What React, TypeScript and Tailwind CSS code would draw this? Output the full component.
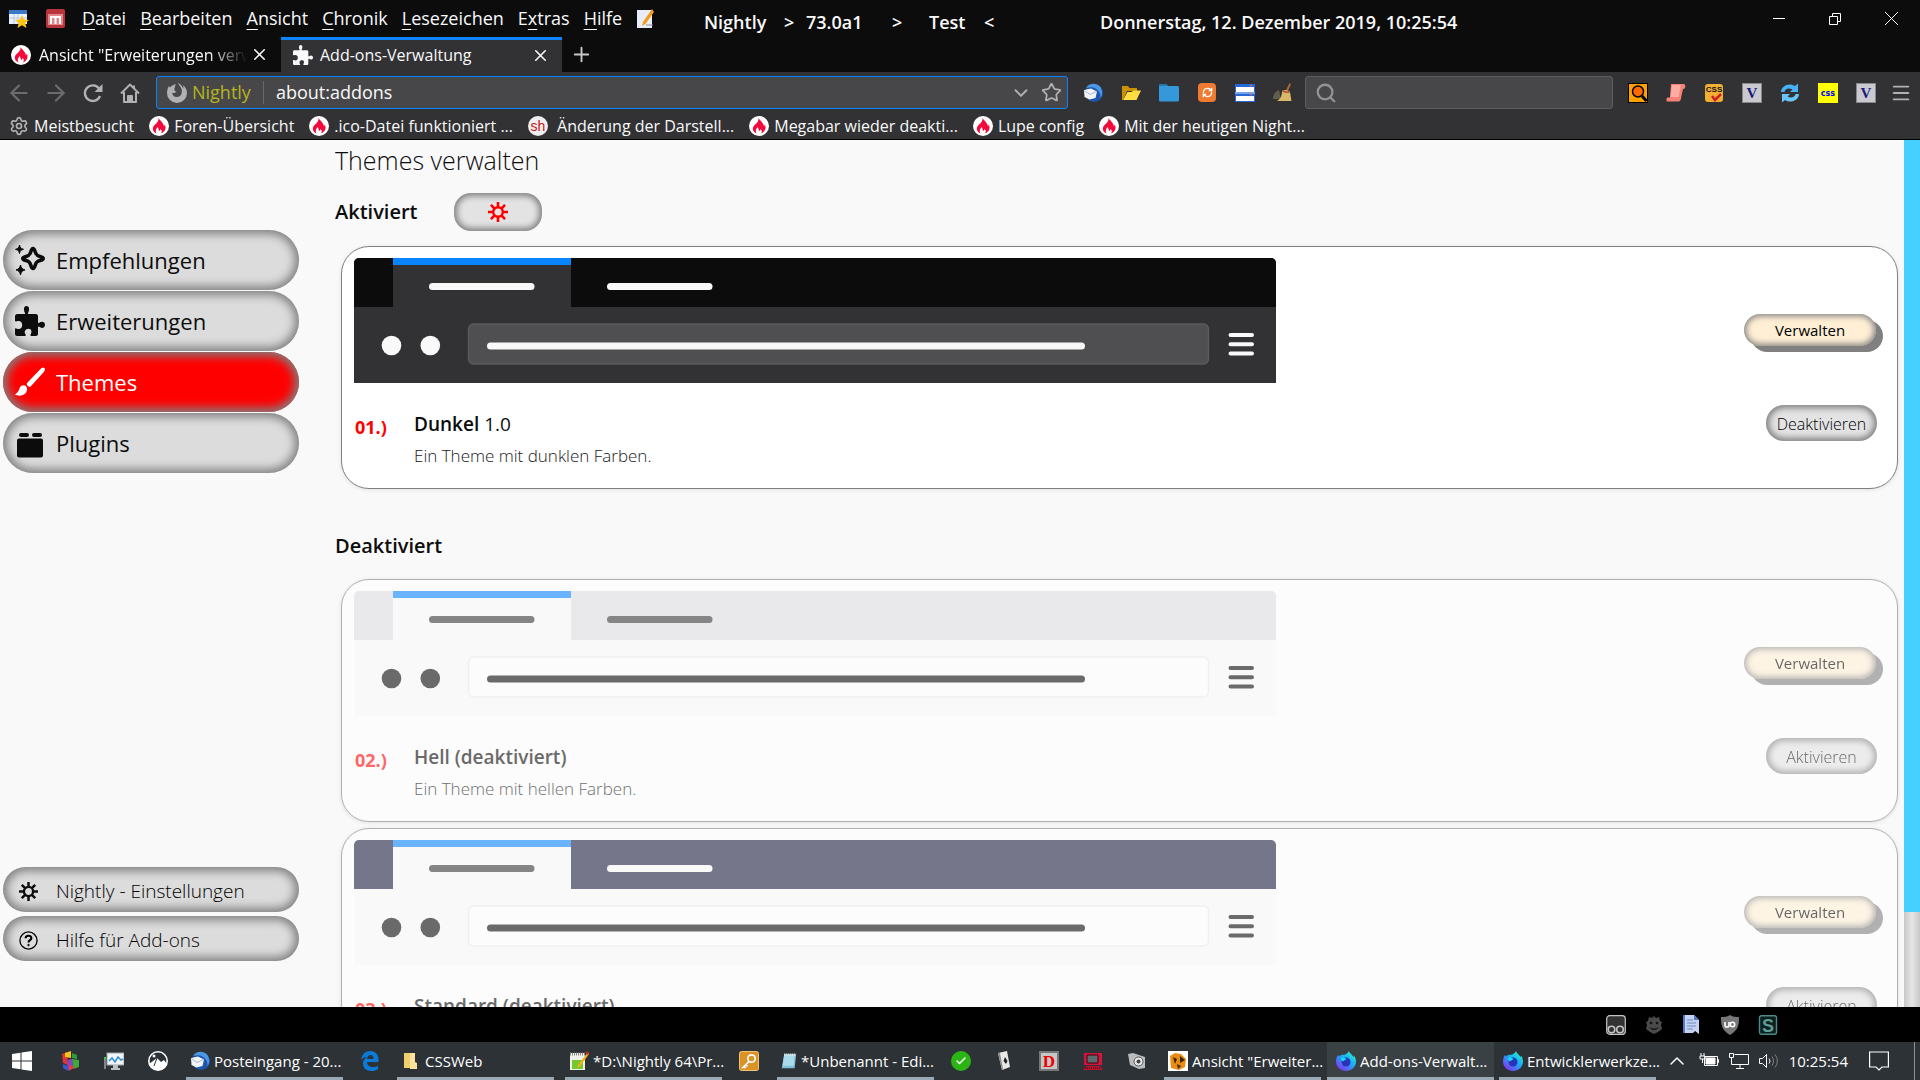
import type { ReactNode } from 'react'
import {
  ArrowLeft, ArrowRight, Star, ChevronDown, ChevronUp, Search, Menu,
  Settings, X, Plus, RefreshCw, Check,
} from 'lucide-react'

// Small icons

function FireIcon() {
  return (
    <svg width="20" height="20" viewBox="0 0 20 20" className="shrink-0">
      <circle cx="10" cy="10" r="10" fill="#fff" />
      <path d="M9.500 2c1 2.200 5 4.500 5.500 8.500.5-.5.7-1.300.6-2.200 2 3.200.9 7.700-3.600 9.200 1.200-1.500 1-3.200-.3-4.500-.2 1-.8 1.700-1.500 2-.3-1.600-1.300-2.400-1.200-4-2 1.500-3 4.300-1.300 6.400C3.500 16 2.800 12 5.300 9.300 7.700 7 9.800 5.500 9.500 2z" fill="#f5093a" />
    </svg>
  )
}

function GearIcon({ size, color }: { size: number; color: string }) {
  return (
    <svg width={size} height={size} viewBox="0 0 20 20" className="shrink-0" fill="none" stroke={color}>
      <circle cx="10" cy="10" r="4.800" strokeWidth="2.400" />
      <path d="M10 0v5M10 15v5M0 10h5M15 10h5M2.900 2.900l3.600 3.600M13.500 13.500l3.600 3.600M17.100 2.900l-3.600 3.600M6.500 13.500l-3.600 3.600" strokeWidth="2.600" />
    </svg>
  )
}

function PuzzleIcon({ size }: { size: number }) {
  return (
    <svg width={size} height={size} viewBox="0 0 30 30" className="shrink-0" fill="currentColor">
      <path d="M2 8h7.500c.6 0 .8-.5.5-1.100C8.500 4.500 8.300 0 11.500 0S14.600 4.500 13 6.900c-.3.600 0 1.100.6 1.100H21c1 0 2 1 2 2v6.300c0 .8.6 1 1.200.5 2.500-2 5.800-1.200 5.800 2s-3.300 4-5.800 2c-.6-.5-1.200-.2-1.200.5V28c0 1-1 2-2 2h-4.800c-.8 0-1-.7-.6-1.400 1.500-2.600 1.200-5.800-2.100-5.800s-4.800 3.200-2.900 5.800c.5.700.2 1.400-.6 1.400H2c-1 0-2-1-2-2v-4.800c0-.8.600-1 1.300-.7C4.500 24 7.200 22.500 7.200 19s-2.700-4.600-5.900-3.500C.6 15.700 0 15.400 0 14.800V10c0-1 1-2 2-2z" />
    </svg>
  )
}

function SparkleIcon() {
  return (
    <svg width="30" height="30" viewBox="0 0 30 30" className="shrink-0">
      <path d="M18 3.500c1.200 0 1.700 1.500 2.300 3.500 1 3 1.700 3.600 4.700 4.400 2 .5 3.200 1 3.200 2.100s-1.200 1.600-3.200 2.100c-3 .8-3.700 1.400-4.700 4.400-.6 2-1.100 3.500-2.300 3.500s-1.700-1.500-2.300-3.500c-1-3-1.700-3.600-4.700-4.400-2-.5-3.200-1-3.200-2.100s1.200-1.600 3.200-2.100c3-.8 3.700-1.400 4.700-4.400.6-2 1.100-3.500 2.300-3.500z" fill="none" stroke="currentColor" strokeWidth="3.600" strokeLinejoin="round" />
      <path d="M4.500 0c.7 3 1.300 3.500 4 4.300-2.700.8-3.300 1.300-4 4.200-.7-2.900-1.300-3.400-4-4.200 2.700-.8 3.300-1.300 4-4.300zM5.500 20c.8 3.300 1.600 4 4.500 4.900-2.900.9-3.700 1.600-4.500 5-.8-3.400-1.600-4.100-4.500-5 2.900-.9 3.700-1.600 4.500-4.900z" fill="currentColor" stroke="currentColor" />
    </svg>
  )
}

function BrushIcon() {
  return (
    <svg width="30" height="30" viewBox="0 0 30 30" className="shrink-0" fill="currentColor">
      <path d="M29.400 1.100c-1-1-2.300-.6-3.400.4L12.300 15.700c-1 1.200-.6 2.300.6 3.400s2.300 1 3.200-.1L29 4.700c1-1.300 1.300-2.700.4-3.600zM10.600 18.800c-2.600-1.500-5.200-.2-6 2.300C3.800 24 2.500 26 0 27.500c3 1.800 8 1.600 10.500-1.200 2-2.200 2-5.600.1-7.500z" />
    </svg>
  )
}

function PluginIcon() {
  return (
    <svg width="30" height="30" viewBox="0 0 30 30" className="shrink-0" fill="currentColor">
      <rect x="4" y="5" width="10" height="4" rx="2" />
      <rect x="17" y="5" width="10" height="4" rx="2" />
      <rect x="2" y="10.500" width="26" height="19" rx="2" />
    </svg>
  )
}

function HelpIcon() {
  return (
    <svg width="19" height="19" viewBox="0 0 20 20" className="shrink-0" fill="none" stroke="currentColor">
      <circle cx="10" cy="10" r="9" strokeWidth="1.400" />
      <path d="M7 7.600C7 5.800 8.300 5 10 5s3 1 3 2.600c0 2-3 2.200-3 4.400" strokeWidth="2.200" />
      <circle cx="10" cy="14.800" r="0.800" fill="currentColor" strokeWidth="1" />
    </svg>
  )
}

function FirefoxGlyph() {
  return (
    <svg width="20" height="20" viewBox="0 0 20 20" className="shrink-0">
      <path d="M9 1C5 2 3.500 4 3 4.500L2 3C.5 5.500 0 8 0 10a10 10 0 0 0 20 0c0-3-1.500-6-4-8 .5 1.500.5 2.500.3 3.500C15 2.500 13 1 11 0c.5 2 2.500 3 3.500 6s0 8-4.500 8c-3 0-5-2-4.500-4.500C6.500 10.500 8.500 10 9.500 8.500 7.500 8.500 7 7 7.500 5.500 8 4 8 2.500 9 1z" fill="#b1b1b3" />
    </svg>
  )
}

function FirefoxIcon({ id }: { id: string }) {
  return (
    <svg width="20" height="20" viewBox="0 0 20 20" className="shrink-0">
      <defs>
        <linearGradient id={id} x1="1" y1="0" x2="0.200" y2="1">
          <stop offset="0" stopColor="#3dffb0" />
          <stop offset="0.450" stopColor="#14b5f5" />
          <stop offset="1" stopColor="#8a2cf5" />
        </linearGradient>
      </defs>
      <path d="M13 0c.5 2.500 3 3 4.500 6 .5-.5.500-1 .5-1.500C19.500 6.500 20 9 20 10.500 20 16 15.500 20 10 20S0 16 0 10.500C0 8 .8 5.500 2 4l1 1.500C4 4.500 5 4 6.500 3.800 8.500 3.800 11 3.500 13 0z" fill={`url(#${id})`} />
      <circle cx="10" cy="11" r="4.500" fill="#2b32b8" />
      <path d="M5 7c2-1 4-.5 5.500 1.500-2 .2-2 1.500-3.500 1.800C6 10 5 9 5 7z" fill="#0ce2ee" />
    </svg>
  )
}

function ThunderbirdIcon() {
  return (
    <svg width="20" height="20" viewBox="0 0 20 20" className="shrink-0">
      <circle cx="11" cy="10" r="9" fill="#1d56ad" />
      <path d="M3 5C6 0 13-.5 17 3.500c3 4 2.500 9 .5 11.500C18 10 15 6 10 4.500 7 4 5 4.500 3 5z" fill="#4b97e2" />
      <path d="M1 7l7-1.500 6 3-1.500 6.500-6 1.500L1.500 14z" fill="#f1f4f8" />
      <path d="M1.500 7.500L7 11.500l6.500-3" fill="none" stroke="#a9b9cb" />
    </svg>
  )
}

function OpenFolderIcon() {
  return (
    <svg width="20" height="20" viewBox="0 0 20 20">
      <path d="M1 3h6l1.500 2H16v3H6L2 17H1z" fill="#c99200" />
      <path d="M6.500 9h4l2-1.500H20L15.500 17H2z" fill="#ffdc40" />
    </svg>
  )
}

function BlueFolderIcon() {
  return (
    <svg width="20" height="20" viewBox="0 0 20 20">
      <path d="M0 2.500C0 1.500 1 1 2 1h5l2 2h9c1.500 0 2 .5 2 2v12c0 1-.5 1.500-1.500 1.500h-17C.5 18.500 0 18 0 17z" fill="#3498db" />
      <path d="M0 2.500C0 1.500 1 1 2 1h5l2 2H0z" fill="#2477ad" />
    </svg>
  )
}

function ServerIcon() {
  return (
    <svg width="20" height="20" viewBox="0 0 20 20">
      <rect x="0" y="1" width="20" height="18" fill="#2467d6" />
      <path d="M1 4h18v5H1zM1 13h18v5H1z" fill="#fff" />
      <path d="M0 10h20" stroke="#cfe0fb" />
      <path d="M15 2.500h2M15 11.500h2" stroke="#e0607c" strokeWidth="1.500" />
    </svg>
  )
}

function BroomIcon() {
  return (
    <svg width="20" height="20" viewBox="0 0 20 20">
      <path d="M0 16c0-5 3-8 6-9l2 9z" fill="#615d50" />
      <path d="M16.500 0l1.500 1-3 7-2-1z" fill="#a9692c" />
      <path d="M9 8c3-2 6-1 8 1l1.500 9H4c3-2 5-4 5-10z" fill="#d9b868" />
      <path d="M9.500 8c2 1 4 1.500 7 1" fill="none" stroke="#b3543a" strokeWidth="1.500" />
    </svg>
  )
}

function MagnifierBox() {
  return (
    <svg width="20" height="20" viewBox="0 0 20 20">
      <rect x="0.500" y="0.500" width="19" height="19" fill="#ffa200" stroke="#000" />
      <circle cx="10" cy="8.500" r="5.500" fill="#ff6a00" stroke="#000" strokeWidth="1.500" />
      <path d="M14 13l4.500 5" stroke="#000" strokeWidth="3" />
    </svg>
  )
}

function ScrollIcon() {
  return (
    <svg width="20" height="20" viewBox="0 0 20 20">
      <path d="M5 1h13c2 1 1.500 4 0 5h-1l-2 9c0 3-2 3.500-3 3.500H1c-1-1.500-.5-4 1-4h2z" fill="#f48276" />
      <path d="M6 2h9l-2.500 12H4.500z" fill="#ffaca2" />
    </svg>
  )
}

function CssCheckIcon() {
  return (
    <svg width="20" height="20" viewBox="0 0 20 20">
      <rect x="1" y="1" width="18" height="18" rx="3" fill="#f3ae34" />
      <text x="10" y="9" textAnchor="middle" fontSize="8" fontWeight="700" fontFamily="Liberation Sans" fill="#111">CSS</text>
      <path d="M8 13l3 4 6-6" fill="none" stroke="#cf2020" strokeWidth="2.500" />
    </svg>
  )
}

function VIcon() {
  return (
    <svg width="20" height="20" viewBox="0 0 20 20">
      <rect x="0.500" y="0.500" width="19" height="19" fill="#c9c9cf" stroke="#87878c" />
      <text x="10" y="15" textAnchor="middle" fontSize="15" fontWeight="700" fontFamily="Liberation Serif" fill="#1a1a78">V</text>
    </svg>
  )
}

function SyncIcon() {
  return (
    <svg width="20" height="20" viewBox="0 0 20 20">
      <path d="M1 9C1 3 9-1 15 3l3-2.500V9h-8l2.500-2.500C9 4.500 5 5.500 4.500 9z" fill="#48b2f5" />
      <path d="M19 11c0 6-8 10-14 6l-3 2.500V11h8l-2.500 2.500c3.500 2 7.500 1 8-2.500z" fill="#6ac4fb" />
    </svg>
  )
}

function CssYellow() {
  return (
    <svg width="20" height="20" viewBox="0 0 20 20">
      <rect width="20" height="20" fill="#ff0" />
      <text x="10" y="13" textAnchor="middle" fontSize="8" fontWeight="700" fontFamily="DejaVu Sans" fill="#00f">css</text>
    </svg>
  )
}

function NoteIcon() {
  return (
    <svg width="20" height="20" viewBox="0 0 20 20" className="shrink-0">
      <rect x="1" y="2" width="15" height="17" fill="#f1f1ec" />
      <path d="M1 3h15" stroke="#888" strokeWidth="3" strokeDasharray="1 1" />
      <path d="M3 9h11v9H3z" fill="#74c829" />
      <path d="M19 1L9 14l-1 3 3-1.500L20 3z" fill="#f0b21c" />
      <path d="M18 0l2 2-1.500 2-2-2z" fill="#c72b25" />
    </svg>
  )
}

// Browser header

const MENU = [
  { key: 'D', rest: 'atei' },
  { key: 'B', rest: 'earbeiten' },
  { key: 'A', rest: 'nsicht' },
  { key: 'C', rest: 'hronik' },
  { key: 'L', rest: 'esezeichen' },
  { pre: 'E', key: 'x', rest: 'tras' },
  { key: 'H', rest: 'ilfe' },
]

function MenuBar() {
  return (
    <div className="flex h-[37px] items-center pl-[9px] text-[18px]">
      <div className="flex w-[695px] shrink-0 items-center">
        <svg width="20" height="20" viewBox="0 0 20 20" className="mr-[17px]">
          <rect y="1" width="18" height="14" fill="#e9f1fa" />
          <rect y="1" width="18" height="4" fill="#3c78c8" />
          <path d="M5 5v10M9 5v10M0 9h18" stroke="#b5c9de" />
          <path d="M13 6l2 4.500 5 .5-3.800 3 1.300 5-4.500-2.800L8.500 19l1.300-5L6 11l5-.5z" fill="#fdc416" />
        </svg>
        <svg width="20" height="20" viewBox="0 0 20 20" className="mr-[16px]">
          <rect width="19" height="19" rx="2" fill="#b9343c" />
          <rect x="2" y="5" width="15" height="11" fill="#e5858a" />
          <path d="M5 15V8h9v7M9.500 8v7" fill="none" stroke="#fff" strokeWidth="2" />
        </svg>
        <nav className="flex gap-[14px] pb-[2px]">
          {MENU.map(m => (
            <button key={m.rest} className="leading-6">
              {m.pre}<span className="underline underline-offset-4">{m.key}</span>{m.rest}
            </button>
          ))}
        </nav>
        <svg width="20" height="20" viewBox="0 0 20 20" className="ml-[14px] shrink-0">
          <path d="M1 1h15v18H1z" fill="#e8edf7" />
          <path d="M16 0L7 13l-1 4 3.500-2L18 3z" fill="#f59b1d" />
          <path d="M10 16h7" stroke="#88a" />
        </svg>
      </div>
      <div className="flex pt-[8px] font-semibold whitespace-pre">
        <span className="w-[80px]">Nightly</span>
        <span className="w-[22px]">&gt;</span>
        <span className="w-[86px]">73.0a1</span>
        <span className="w-[37px]">&gt;</span>
        <span className="w-[55px]">Test</span>
        <span className="w-[116px]">&lt;</span>
        <span>Donnerstag, 12. Dezember 2019, 10:25:54</span>
      </div>
      <div className="ml-auto flex gap-[44px] pr-[22px]">
        <button aria-label="Minimieren"><svg width="12" height="12"><path d="M0 5.500h12" stroke="#fff" /></svg></button>
        <button aria-label="Wiederherstellen">
          <svg width="12" height="12" fill="none" stroke="#fff"><path d="M.5 3.500h8v8h-8zM3.500 3.500v-3h8v8h-3" /></svg>
        </button>
        <button aria-label="Schließen"><svg width="13" height="13"><path d="M0 0l13 13M13 0L0 13" stroke="#fff" /></svg></button>
      </div>
    </div>
  )
}

function TabBar() {
  return (
    <div className="flex h-[35px] text-[16px]">
      <div className="flex w-[281px] items-center pl-[11px]">
        <FireIcon />
        <span className="ml-[8px] w-[208px] overflow-hidden whitespace-nowrap [mask-image:linear-gradient(to_right,black_82%,transparent)]">
          Ansicht "Erweiterungen verwalten"
        </span>
        <button aria-label="Tab schließen" className="ml-[3px]"><X size={19} strokeWidth={2} /></button>
      </div>
      <div className="flex w-[281px] items-center border-t-[3px] border-[#0a84ff] bg-[#323234] pr-[12px] pb-[2px] pl-[12px]">
        <PuzzleIcon size={20} />
        <span className="ml-[7px] flex-1">Add-ons-Verwaltung</span>
        <button aria-label="Tab schließen"><X size={19} strokeWidth={2} /></button>
      </div>
      <button aria-label="Neuer Tab" className="ml-[8px] text-[#c8c8c9]"><Plus size={23} strokeWidth={2} /></button>
    </div>
  )
}

function ToolButton({ label, children }: { label: string; children: ReactNode }) {
  return <button aria-label={label} className="flex h-5 w-5 shrink-0 items-center justify-center">{children}</button>
}

function NavBar() {
  return (
    <div className="flex h-[41px] items-center pr-[9px] pl-[9px] text-[#b1b1b3]">
      <div className="flex gap-[17px]">
        <ToolButton label="Zurück"><ArrowLeft size={26} className="shrink-0 text-[#6c6c6e]" /></ToolButton>
        <ToolButton label="Vor"><ArrowRight size={26} className="shrink-0 text-[#6c6c6e]" /></ToolButton>
        <ToolButton label="Neu laden">
          <svg width="20" height="20" viewBox="0 0 20 20" fill="none" stroke="currentColor" strokeWidth="2.400">
            <path d="M16 5.500A7.800 7.800 0 1 0 17 13" />
            <path d="M19.500 1v8h-8z" fill="currentColor" stroke="none" />
          </svg>
        </ToolButton>
        <ToolButton label="Startseite">
          <svg width="20" height="20" viewBox="0 0 20 20" fill="none" stroke="currentColor" strokeWidth="2" strokeLinejoin="round">
            <path d="M1 10.500L10 1.500l9 9M4 9v10h12V9M14 5V2.500" />
            <path d="M8 19v-6h4v6" fill="currentColor" />
          </svg>
        </ToolButton>
      </div>
      <div className="ml-[16px] flex h-[33px] flex-1 items-center rounded-[3px] border border-[#0a84ff] bg-[#474749] px-[10px]">
        <FirefoxGlyph />
        <span className="ml-[5px] text-[18px] text-[#b5b51c]">Nightly</span>
        <span className="ml-[12px] h-[23px] w-px bg-[#69696b]" />
        <input aria-label="Adresse" defaultValue="about:addons" className="ml-[12px] min-w-0 flex-1 bg-transparent text-[18px] text-[#f9f9fa] outline-none" />
        <ChevronDown size={22} />
        <Star size={21} className="ml-[9px] -mr-[5px]" />
      </div>
      <div className="ml-[15px] flex gap-[18px]">
        <ToolButton label="Thunderbird"><ThunderbirdIcon /></ToolButton>
        <ToolButton label="Ordner öffnen"><OpenFolderIcon /></ToolButton>
        <ToolButton label="Profilordner"><BlueFolderIcon /></ToolButton>
        <ToolButton label="Neustart">
          <span className="flex h-[19px] w-[18px] items-center justify-center rounded-[4px] bg-[#ef7b31] text-white"><RefreshCw size={11} strokeWidth={3} /></span>
        </ToolButton>
        <ToolButton label="Server"><ServerIcon /></ToolButton>
        <ToolButton label="Aufräumen"><BroomIcon /></ToolButton>
      </div>
      <label className="ml-[12px] flex h-[33px] w-[308px] items-center rounded-[3px] border border-[#5d5d5f] bg-[#474749] pl-[9px]">
        <Search size={22} strokeWidth={2.500} className="shrink-0 text-[#939395]" />
        <input aria-label="Suchen" className="w-full bg-transparent outline-none" />
      </label>
      <div className="ml-[15px] flex gap-[18px]">
        <ToolButton label="Lupe"><MagnifierBox /></ToolButton>
        <ToolButton label="Skripte"><ScrollIcon /></ToolButton>
        <ToolButton label="CSS prüfen"><CssCheckIcon /></ToolButton>
        <ToolButton label="Version"><VIcon /></ToolButton>
        <ToolButton label="Synchronisieren"><SyncIcon /></ToolButton>
        <ToolButton label="CSS"><CssYellow /></ToolButton>
        <ToolButton label="Version prüfen"><VIcon /></ToolButton>
      </div>
      <div className="ml-[15px] flex">
        <ToolButton label="Menü"><Menu size={22} className="shrink-0" /></ToolButton>
      </div>
    </div>
  )
}

const BOOKMARKS = [
  'Foren-Übersicht',
  '.ico-Datei funktioniert ...',
  'Änderung der Darstell...',
  'Megabar wieder deakti...',
  'Lupe config',
  'Mit der heutigen Night...',
]

function Bookmarks() {
  return (
    <div className="flex h-[27px] items-center gap-[15px] border-b border-black pl-[9px] text-[16px] whitespace-nowrap">
      <a href="#meist" className="flex items-center gap-[5px]">
        <Settings size={20} className="text-[#b1b1b3]" />Meistbesucht
      </a>
      {BOOKMARKS.map((b, i) => (
        <a key={b} href={`#lesezeichen-${i}`} className="flex items-center gap-[5px]">
          {b.startsWith('Änderung') ? (
            <svg width="20" height="20" viewBox="0 0 20 20" className="mr-[4px]">
              <circle cx="10" cy="10" r="10" fill="#eee" />
              <text x="10" y="15" textAnchor="middle" fontSize="14" fontFamily="Liberation Sans" fill="#c4161c">sh</text>
            </svg>
          ) : <FireIcon />}
          {b}
        </a>
      ))}
    </div>
  )
}

// Add-on manager

const NAV = [
  { label: 'Empfehlungen', icon: <SparkleIcon />, active: false },
  { label: 'Erweiterungen', icon: <PuzzleIcon size={30} />, active: false },
  { label: 'Themes', icon: <BrushIcon />, active: true },
  { label: 'Plugins', icon: <PluginIcon />, active: false },
]

function Sidebar() {
  return (
    <aside className="flex w-[335px] shrink-0 flex-col justify-between pt-[90px] pb-[46px] pl-[3px]">
      <nav className="flex w-[296px] flex-col gap-px">
        {NAV.map(n => (
          <button
            key={n.label}
            className={`flex h-[60px] items-center gap-[11px] rounded-[30px] pl-[12px] text-[22px] shadow-[inset_0_0_10px_4px_#808080] ${
              n.active ? 'bg-[#ff0000] text-white' : 'bg-[#dcdcdc] text-[#0c0c0d]'
            }`}
          >
            {n.icon}{n.label}
          </button>
        ))}
      </nav>
      <div className="flex w-[296px] flex-col gap-[4px] text-[19px] font-light text-black">
        <button className="flex h-[45px] items-center gap-[18px] rounded-[23px] bg-[#dcdcdc] pt-[3px] pl-[16px] shadow-[inset_0_0_10px_4px_#808080]">
          <GearIcon size={19} color="#0c0c0d" />Nightly - Einstellungen
        </button>
        <button className="flex h-[45px] items-center gap-[18px] rounded-[23px] bg-[#dcdcdc] pt-[3px] pl-[16px] shadow-[inset_0_0_10px_4px_#808080]">
          <HelpIcon />Hilfe für Add-ons
        </button>
      </div>
    </aside>
  )
}

interface Palette {
  frame: string
  toolbar: string
  accent: string
  tabLine: string
  frameLine: string
  icon: string
  field: string
  fieldBorder: string
}

const DARK: Palette = {
  frame: '#0c0c0d', toolbar: '#323234', accent: '#0a84ff', tabLine: '#f9f9fa',
  frameLine: '#f9f9fa', icon: '#f9f9fa', field: '#4f4f51', fieldBorder: '#5b5b5d',
}
const LIGHT: Palette = {
  frame: '#e9e9eb', toolbar: '#f9f9fa', accent: '#69b3ff', tabLine: '#858585',
  frameLine: '#858585', icon: '#6a6a6a', field: '#fcfcfc', fieldBorder: '#f0f0f0',
}
const STANDARD: Palette = { ...LIGHT, frame: '#76768a', frameLine: '#f9f9fa' }

function ThemePreview({ p }: { p: Palette }) {
  return (
    <svg viewBox="0 0 922 125" className="h-[125px] w-[922px] rounded-t-[5px]">
      <rect width="922" height="125" fill={p.toolbar} />
      <rect width="39" height="49" fill={p.frame} />
      <rect x="217" width="705" height="49" fill={p.frame} />
      <rect x="39" width="178" height="7" fill={p.accent} />
      <rect x="75" y="25" width="105.500" height="7" rx="3.500" fill={p.tabLine} />
      <rect x="253" y="25" width="105.500" height="7" rx="3.500" fill={p.frameLine} />
      <circle cx="37.500" cy="87.500" r="9.800" fill={p.icon} />
      <circle cx="76.300" cy="87.500" r="9.800" fill={p.icon} />
      <rect x="114.500" y="66" width="740" height="40" rx="5" fill={p.field} stroke={p.fieldBorder} strokeWidth="1.400" />
      <rect x="133" y="84.500" width="598" height="7" rx="3.500" fill={p.icon} />
      <path d="M876.500 77h21.500M876.500 86.200h21.500M876.500 95.400h21.500" stroke={p.icon} strokeWidth="4" strokeLinecap="round" />
    </svg>
  )
}

interface Theme {
  nr: string
  name: string
  suffix: string
  text: string
  action: string
  palette: Palette
}

const ENABLED: Theme = {
  nr: '01.)', name: 'Dunkel', suffix: ' 1.0', text: 'Ein Theme mit dunklen Farben.', action: 'Deaktivieren', palette: DARK,
}
const DISABLED: Theme[] = [
  { nr: '02.)', name: 'Hell (deaktiviert)', suffix: '', text: 'Ein Theme mit hellen Farben.', action: 'Aktivieren', palette: LIGHT },
  { nr: '03.)', name: 'Standard (deaktiviert)', suffix: '', text: 'Ein Theme mit den Farben des Betriebssystems.', action: 'Aktivieren', palette: STANDARD },
]

function ThemeCard({ theme, off = false }: { theme: Theme; off?: boolean }) {
  return (
    <article
      className={`flex h-[243px] shrink-0 justify-between rounded-[28px] border pt-[11px] pl-[12px] shadow-[0_1px_4px_rgba(12,12,13,0.1)] ${
        off ? 'border-[#b0b0b0] bg-[#fcfcfc]' : 'border-[#808080] bg-white'
      }`}
    >
      <div>
        <ThemePreview p={theme.palette} />
        <div className="mt-[26px] flex">
          <span className={`w-[60px] pt-[6px] pl-px text-[18px] leading-6 font-bold ${off ? 'text-[#ff6666]' : 'text-[#ff0000]'}`}>{theme.nr}</span>
          <div>
            <h3 className={`text-[19px] leading-[30px] ${off ? 'text-[#6a6a6a]' : 'text-[#0c0c0d]'}`}>
              <span className="font-semibold">{theme.name}</span>{theme.suffix}
            </h3>
            <p className={`mt-[5px] text-[17px] leading-6 font-light ${off ? 'text-[#6f6f71]' : 'text-[#18181a]'}`}>{theme.text}</p>
          </div>
        </div>
      </div>
      <div className={`flex flex-col items-end pt-[56px] pr-[20px] text-black ${off ? 'opacity-60' : ''}`}>
        <button className="mr-px h-[32px] w-[132px] rounded-[16px] bg-[#ffefd5] text-[15px] shadow-[inset_0_0_6px_2px_#808080,7px_6px_0_0_#808080]">
          Verwalten
        </button>
        <button className="mt-[59px] h-[36px] w-[111px] rounded-[18px] bg-[#e3e3e4] pt-px text-[16px] font-light shadow-[inset_0_0_6px_3px_#808080]">
          {theme.action}
        </button>
      </div>
    </article>
  )
}

function Manager() {
  return (
    <main className="flex min-h-0 flex-1 overflow-hidden bg-[#f9f9fa]">
      <Sidebar />
      <div className="flex min-w-0 flex-1 flex-col overflow-hidden pr-[6px]">
        <h1 className="mt-px text-[25px] leading-[38px] font-light text-[#0c0c0d]">Themes verwalten</h1>
        <div className="mt-[14px] flex shrink-0 items-center">
          <h2 className="w-[119px] text-[20px] font-semibold text-[#0c0c0d]">Aktiviert</h2>
          <button aria-label="Werkzeuge" className="flex h-[38px] w-[88px] items-center justify-center rounded-[17px] bg-[#e3e3e4] shadow-[inset_0_0_6px_3px_#808080]">
            <GearIcon size={20} color="#ff0000" />
          </button>
        </div>
        <section className="mt-[15px] ml-[6px]">
          <ThemeCard theme={ENABLED} />
        </section>
        <h2 className="mt-[42px] text-[20px] leading-[30px] font-semibold text-[#0c0c0d]">Deaktiviert</h2>
        <section className="mt-[18px] ml-[6px] flex flex-col gap-[6px]">
          {DISABLED.map(t => <ThemeCard key={t.nr} theme={t} off />)}
        </section>
      </div>
      <div className="w-[16px] shrink-0 bg-gradient-to-r from-[#c8c8c8] via-[#e6e6e6] to-[#c8c8c8]">
        <div className="h-[89%] bg-[#45d0ff]" />
      </div>
    </main>
  )
}

function StatusBar() {
  return (
    <footer className="flex h-[35px] shrink-0 items-center justify-end gap-[18px] bg-black pr-[142px]">
      <svg width="20" height="20" viewBox="0 0 20 20" fill="none" stroke="#c5c5c5">
        <rect x="0.700" y="0.700" width="18.600" height="18.600" rx="3" fill="#333" strokeWidth="1.200" />
        <circle cx="5.500" cy="14.500" r="3.300" strokeWidth="1.600" /><circle cx="14" cy="14.500" r="3.300" strokeWidth="1.600" />
      </svg>
      <svg width="20" height="20" viewBox="0 0 20 20" fill="#4a4a4a">
        <path d="M10 1l2 2 3-1 1 4 2 1-1 3 1 4-4 3-4 2-4-2-4-3 1-4-1-3 2-1 1-4 3 1z" />
        <circle cx="7" cy="8" r="1.300" fill="#111" /><circle cx="13" cy="8" r="1.300" fill="#111" />
        <path d="M5.500 12c3 2 6 2 9 0-1 4-8 4-9 0z" fill="#111" />
      </svg>
      <svg width="20" height="20" viewBox="0 0 20 20">
        <path d="M2 0h10l5 5v14l-4-3-2 2H2z" fill="#c3d3f1" />
        <path d="M5 5h6M5 8h9M5 11h9M5 14h6" stroke="#6c8bc8" />
        <path d="M1 0h2v18H1z" fill="#5479c9" />
        <path d="M12 0v5h5z" fill="#5479c9" />
      </svg>
      <svg width="20" height="20" viewBox="0 0 20 20">
        <path d="M10 0c3 2 6 2 9 2 0 9-1 13-9 18C2 15 1 11 1 2c3 0 6 0 9-2z" fill="#77777a" />
        <path d="M5 7v3.500c0 2 4 2 4 0V7" fill="none" stroke="#fff" strokeWidth="1.600" />
        <circle cx="12.500" cy="9.500" r="2.200" fill="none" stroke="#fff" strokeWidth="1.600" />
      </svg>
      <svg width="20" height="20" viewBox="0 0 20 20">
        <rect x="1.500" y="0.700" width="17" height="18.600" rx="2" fill="#0c1f1e" stroke="#4e8a86" strokeWidth="1.400" />
        <text x="10" y="16.500" textAnchor="middle" fontSize="18" fontWeight="700" fontFamily="Liberation Sans" fill="#5e9c97">S</text>
      </svg>
    </footer>
  )
}

// Windows taskbar

function TaskIcon({ label, className, children }: { label: string; className?: string; children: ReactNode }) {
  return <button aria-label={label} className={`flex h-full w-[20px] shrink-0 items-center ${className ?? ''}`}>{children}</button>
}

function TaskButton({ icon, label, active = false, className }: {
  icon: ReactNode
  label: string
  active?: boolean
  className?: string
}) {
  return (
    <button
      className={`flex h-full shrink-0 items-center gap-[4px] border-b-[3px] border-[#99aab5] pt-[3px] whitespace-nowrap ${
        active ? 'w-[167px] bg-[#3a4145] pl-[9px]' : 'w-[157px] pl-[4px]'
      } ${className ?? ''}`}
    >
      {icon}{label}
    </button>
  )
}

function Taskbar() {
  return (
    <div className="flex h-[38px] shrink-0 items-center bg-[#2d3237] text-[15px] text-white">
      <TaskIcon label="Start" className="ml-[12px]">
        <svg width="20" height="20" viewBox="0 0 20 20" fill="#fff"><path d="M0 3l8.500-1.200v7.700H0zM9.500 1.600L20 0v9.500H9.500zM0 10.500h8.500v7.700L0 17zM9.500 10.500H20V20L9.500 18.400z" /></svg>
      </TaskIcon>
      <TaskIcon label="Classic Shell" className="ml-[28px]">
        <svg width="20" height="20" viewBox="0 0 20 20">
          <path d="M2 3l5-2 1 13-5-2z" fill="#e23535" /><path d="M5 2l6-2v7L5 6z" fill="#f2c618" />
          <path d="M12 2l5 2v4l-5-1z" fill="#2f9e38" /><path d="M12 8l7 1v7l-6 2z" fill="#3fa93d" />
          <path d="M3 13l5 2v5l-5-3z" fill="#3659d2" /><path d="M7 9l5-1 1 9-5 2z" fill="#8a44c2" /><path d="M9 14l6 2-6 4z" fill="#e83c3c" />
        </svg>
      </TaskIcon>
      <TaskIcon label="Leistung" className="ml-[24px]">
        <svg width="20" height="20" viewBox="0 0 20 20">
          <rect x="3" y="2" width="17" height="12" fill="#f0f4f6" stroke="#9ba6ad" />
          <path d="M5 10l3-3 3 4 3-5 3 3 2-1" fill="none" stroke="#2d8fd5" strokeWidth="1.500" />
          <path d="M9 14h5v3h2v2H7v-2h2z" fill="#b8bfc3" /><path d="M0 7h2v11H0z" fill="#7e878c" /><path d="M0 6h2v2H0z" fill="#34d834" />
        </svg>
      </TaskIcon>
      <TaskIcon label="Fotos" className="ml-[24px]">
        <svg width="20" height="20" viewBox="0 0 20 20">
          <circle cx="10" cy="10" r="9.200" fill="none" stroke="#fff" strokeWidth="1.600" />
          <path d="M1 13L9 7l4 4 3-2 3 4c-1 4-5 6-9 6s-8-2-9-6z" fill="#fff" /><circle cx="6" cy="5" r="1.500" fill="#fff" /><path d="M9 7l-3 8" stroke="#2d3237" />
        </svg>
      </TaskIcon>
      <TaskButton className="ml-[18px]" icon={<ThunderbirdIcon />} label="Posteingang - 20..." />
      <TaskIcon label="Edge" className="ml-[18px]">
        <svg width="18" height="20" viewBox="0 0 18 20"><path d="M0 9C1 3 4.500 0 9.500 0S17.500 4 17.500 8v3H6c0 3 2.500 5 6 5 2 0 4-.5 5-1.500V18c-2 1.500-4 2-6.500 2C5 20 2 17 2 12.500c0-3 1.500-5 4-6.500C3.500 6 1.500 7 0 9zm6-1h6.500c0-2.500-1-4-3-4S6.300 6 6 8z" fill="#0b7bd8" /></svg>
      </TaskIcon>
      <TaskButton
        className="ml-[16px]"
        label="CSSWeb"
        icon={<svg width="20" height="20" viewBox="0 0 20 20"><path d="M3 2h9v15H3z" fill="#f0cd6d" /><path d="M9 2h5v9l2 1v6H9z" fill="#fce29a" /></svg>}
      />
      <TaskButton className="ml-[11px]" icon={<NoteIcon />} label="*D:\Nightly 64\Pr..." />
      <TaskIcon label="Passwörter" className="ml-[17px]">
        <svg width="20" height="20" viewBox="0 0 20 20">
          <rect x="0.500" y="0.500" width="19" height="19" rx="2" fill="#db9325" stroke="#f0c478" />
          <circle cx="12.500" cy="7.500" r="3.700" fill="none" stroke="#fff" strokeWidth="1.700" /><path d="M10 10.500l-6 6h3M7 14l1.500 1.500" fill="none" stroke="#fff" strokeWidth="1.700" />
        </svg>
      </TaskIcon>
      <TaskButton
        className="ml-[18px]"
        label="*Unbenannt - Edi..."
        icon={<svg width="20" height="20" viewBox="0 0 20 20"><path d="M4 2h15l-2 17H1z" fill="#7fc1d8" /><path d="M4 2h13l-1 14H2z" fill="#a9dbea" /><path d="M4 2h15" stroke="#e8eef0" strokeWidth="3" strokeDasharray="1.500 1" /></svg>}
      />
      <TaskIcon label="Status" className="ml-[17px]">
        <span className="flex h-5 w-5 items-center justify-center rounded-full bg-[#2bb514]"><Check size={12} strokeWidth={3} /></span>
      </TaskIcon>
      <TaskIcon label="Solitär" className="ml-[24px]">
        <svg width="20" height="20" viewBox="0 0 20 20"><path d="M3 2l9-2 3 16-8 3z" fill="#e8e8e8" /><path d="M3 2l4 17 1-1L5 2z" fill="#8b8b8b" /><path d="M10 6l2.500 4-1.500 3-2.500-3z" fill="#222" /></svg>
      </TaskIcon>
      <TaskIcon label="Wörterbuch" className="ml-[24px]">
        <svg width="20" height="20" viewBox="0 0 20 20"><rect x="1" y="1" width="18" height="18" fill="#c6c6c6" stroke="#777" strokeWidth="2" /><text x="10" y="16" textAnchor="middle" fontSize="17" fontWeight="700" fontFamily="Liberation Serif" fill="#e00">D</text></svg>
      </TaskIcon>
      <TaskIcon label="Monitor" className="ml-[24px]">
        <svg width="20" height="20" viewBox="0 0 20 20"><path d="M1 2h18v12H1z" fill="#d4143c" /><path d="M4 4h11v8H4z" fill="#5b6a70" stroke="#40000c" /><path d="M3 15h14l3 4H0z" fill="#b3142f" /><path d="M2 17h16" stroke="#3a0008" strokeDasharray="1 1" /></svg>
      </TaskIcon>
      <TaskIcon label="Kamera" className="ml-[24px]">
        <svg width="20" height="20" viewBox="0 0 20 20"><path d="M1 3l5-1 3 1 9 3v11l-6 1-9-4z" fill="#b9bdbf" /><circle cx="11.500" cy="10.500" r="4.500" fill="#e8e8e8" stroke="#555" /><circle cx="11.500" cy="10.500" r="2" fill="#444" /></svg>
      </TaskIcon>
      <TaskButton
        className="ml-[17px]"
        label={'Ansicht "Erweiter...'}
        icon={<svg width="20" height="20" viewBox="0 0 20 20" className="shrink-0"><rect width="20" height="20" fill="#fff" /><path d="M2 5l5-3 6 1 5 5-1 8-6 3-8-2z" fill="#e98d12" /><path d="M5 6l4 2-2 5zM12 5l5 4-5 3zM9 13l4 2-3 3z" fill="#3a2608" /></svg>}
      />
      <TaskButton className="ml-[6px]" active icon={<FirefoxIcon id="fx-addons" />} label="Add-ons-Verwalt..." />
      <TaskButton className="ml-[5px]" icon={<FirefoxIcon id="fx-tools" />} label="Entwicklerwerkze..." />
      <div className="ml-auto flex h-full items-center gap-[10px]">
        <ChevronUp size={24} strokeWidth={1.500} />
        <svg width="20" height="20" viewBox="0 0 20 20" fill="none" stroke="#fff"><path d="M5.500 5.500h13v9h-13zM18.500 8.500h1v3h-1M2 2v3M5 2v3M1 5h5v3H1zM3.500 8v4" /><path d="M7 7h9v6H7z" fill="#fff" /></svg>
        <svg width="20" height="20" viewBox="0 0 20 20" fill="none" stroke="#fff"><path d="M5.500 3.500h14v10H2.500V8M11 14v3M7 17.500h8M.5 2.500h4v4h-4zM2.500 6v2" /></svg>
        <svg width="20" height="20" viewBox="0 0 20 20" fill="none" stroke="#fff"><path d="M.5 7.500h3l4-4v13l-4-4h-3zM10 7.500c1.200 1.500 1.200 3.500 0 5" /><path d="M13 5.500c2 3 2 6 0 9M16 3.500c3 4 3 9 0 13" stroke="#7b8084" /></svg>
        <time>10:25:54</time>
        <svg width="20" height="20" viewBox="0 0 20 20" fill="none" stroke="#fff" strokeWidth="1.200" className="ml-[11px]"><path d="M.6 1h18.800v15H13l-3 3-3-3H.6z" /></svg>
        <span className="ml-[15px] h-full w-[6px] border-l border-[#8b9094]" />
      </div>
    </div>
  )
}

export default function App() {
  return (
    <div className="flex h-screen flex-col overflow-hidden font-['Open_Sans',sans-serif]">
      <header className="shrink-0 bg-[#0c0c0d] text-[#f9f9fa]">
        <MenuBar />
        <TabBar />
        <div className="bg-[#323234]">
          <NavBar />
          <Bookmarks />
        </div>
      </header>
      <Manager />
      <StatusBar />
      <Taskbar />
    </div>
  )
}
